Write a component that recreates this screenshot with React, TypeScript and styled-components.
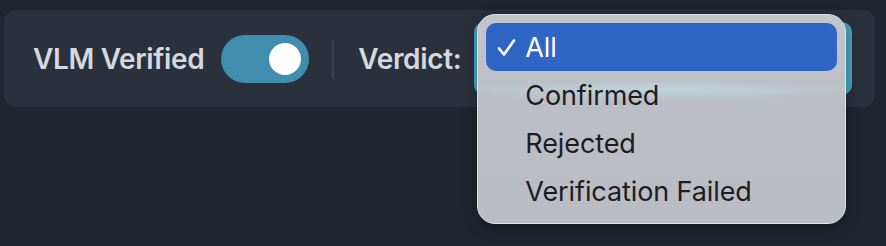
import React, { useState } from 'react';
import styled, { createGlobalStyle } from 'styled-components';

const GlobalStyle = createGlobalStyle`
  html, body {
    margin: 0;
    padding: 0;
    background: #20252f;
    font-family: Inter, "Noto Sans", sans-serif;
  }
`;

const Page = styled.div`
  padding: 10px 11px 0 4px;
  height: 246px;
  box-sizing: border-box;
`;

const Toolbar = styled.div`
  display: flex;
  align-items: center;
  height: 97px;
  box-sizing: border-box;
  padding: 0 23px 0 29px;
  background: #2b303d;
  border-radius: 12px;
`;

const Label = styled.span`
  color: #d5d8df;
  font-size: 28px;
  font-weight: 600;
  letter-spacing: -0.35px;
  white-space: nowrap;
`;

const Track = styled.button<{ $on: boolean }>`
  position: relative;
  flex: none;
  width: 88px;
  height: 48px;
  margin-left: 17px;
  border: none;
  border-radius: 24px;
  padding: 0;
  background: ${(p) => (p.$on ? '#418db0' : '#4a5060')};
  cursor: pointer;
`;

const Knob = styled.span<{ $on: boolean }>`
  position: absolute;
  top: 8px;
  left: ${(p) => (p.$on ? '48px' : '8px')};
  width: 32px;
  height: 32px;
  border-radius: 50%;
  background: #ffffff;
`;

const Divider = styled.div`
  flex: none;
  width: 2px;
  height: 38px;
  margin: 0 24px 0 23px;
  background: #3b4150;
`;

const SelectWrap = styled.div`
  position: relative;
  margin-left: 13px;
  flex: 1;
`;

const SelectBox = styled.div`
  height: 73px;
  border-radius: 10px;
  background: #46a6bf;
`;

const Menu = styled.div`
  position: absolute;
  top: -8px;
  left: 3px;
  width: 369px;
  height: 210px;
  box-sizing: border-box;
  padding: 8px 8px;
  border-radius: 18px;
  border: 1px solid #dfe2e7;
  background:
    radial-gradient(ellipse 60% 5% at 50% 36%, rgba(190, 225, 235, 0.6), transparent),
    linear-gradient(#c3c5cb, #bcbec5 40%, #babcc3);
  box-shadow: 0 4px 14px rgba(0, 0, 0, 0.35);
  display: flex;
  flex-direction: column;
`;

const Item = styled.div<{ $active?: boolean }>`
  display: flex;
  align-items: center;
  height: 48px;
  flex: none;
  padding-left: 11px;
  border-radius: 10px;
  background: ${(p) => (p.$active ? '#2f66c6' : 'transparent')};
  color: ${(p) => (p.$active ? '#ffffff' : '#1d1d1f')};
  font-size: 27px;
  font-weight: 400;
  letter-spacing: -0.1px;
  white-space: nowrap;
`;

const Check = styled.span`
  display: flex;
  align-items: center;
  width: 28px;
  flex: none;
`;

const CheckIcon = () => (
  <svg width="19" height="19" viewBox="0 0 19 19" fill="none">
    <path d="M2 10.5 L7 16.5 L17 2.5" stroke="#ffffff" strokeWidth="2.6" strokeLinecap="round" strokeLinejoin="round" />
  </svg>
);

const options = ['All', 'Confirmed', 'Rejected', 'Verification Failed'];

export default function App() {
  const [on, setOn] = useState(true);
  const [verdict, setVerdict] = useState('All');

  return (
    <Page>
      <GlobalStyle />
      <Toolbar>
        <Label>VLM Verified</Label>
        <Track $on={on} onClick={() => setOn(!on)}>
          <Knob $on={on} />
        </Track>
        <Divider />
        <Label>Verdict:</Label>
        <SelectWrap>
          <SelectBox />
          <Menu>
            {options.map((o) => (
              <Item key={o} $active={o === verdict} onClick={() => setVerdict(o)}>
                <Check>{o === verdict ? <CheckIcon /> : null}</Check>
                {o}
              </Item>
            ))}
          </Menu>
        </SelectWrap>
      </Toolbar>
    </Page>
  );
}
